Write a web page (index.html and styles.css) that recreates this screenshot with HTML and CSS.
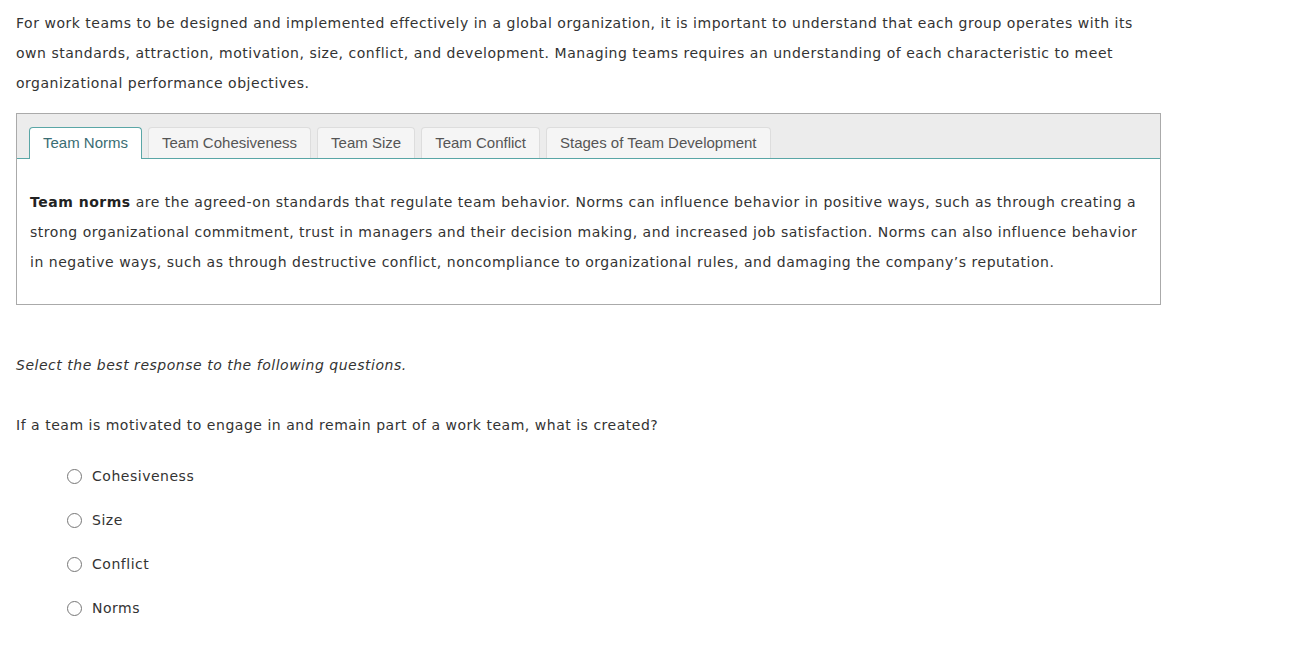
FILE: index.html
```html
<!DOCTYPE html>
<html lang="en">
<head>
  <meta charset="UTF-8">
  <title>Team Characteristics</title>
  <link rel="stylesheet" href="styles.css">
</head>
<body>
  <p class="intro">For work teams to be designed and implemented effectively in a global organization, it is important to understand that each group operates with its own standards, attraction, motivation, size, conflict, and development. Managing teams requires an understanding of each characteristic to meet organizational performance objectives.</p>

  <div class="tabs">
    <div class="tab-bar">
      <div class="tab active">Team Norms</div>
      <div class="tab">Team Cohesiveness</div>
      <div class="tab">Team Size</div>
      <div class="tab">Team Conflict</div>
      <div class="tab">Stages of Team Development</div>
    </div>
    <div class="tab-panel">
      <p><strong>Team norms</strong> are the agreed-on standards that regulate team behavior. Norms can influence behavior in positive ways, such as through creating a strong organizational commitment, trust in managers and their decision making, and increased job satisfaction. Norms can also influence behavior in negative ways, such as through destructive conflict, noncompliance to organizational rules, and damaging the company’s reputation.</p>
    </div>
  </div>

  <p class="instructions">Select the best response to the following questions.</p>

  <p class="question">If a team is motivated to engage in and remain part of a work team, what is created?</p>

  <ul class="options">
    <li><span class="radio"></span>Cohesiveness</li>
    <li><span class="radio"></span>Size</li>
    <li><span class="radio"></span>Conflict</li>
    <li><span class="radio"></span>Norms</li>
  </ul>
</body>
</html>
```

FILE: styles.css
```css
body {
  margin: 0;
  padding: 8px 16px;
  font-family: "DejaVu Sans", Verdana, sans-serif;
  font-size: 14px;
  letter-spacing: 0.52px;
  line-height: 30px;
  color: #333;
  background-color: white;
}
p {
  margin: 0;
}
.intro {
  width: 1140px;
}
.tabs {
  width: 1143px;
  margin-top: 15px;
  border: 1px solid #aaa;
}
.tab-bar {
  display: flex;
  gap: 6px;
  padding: 13px 12px 0;
  background-color: #ececec;
  border-bottom: 1px solid #5aa6a6;
}
.tab {
  font-family: "Liberation Sans", Arial, sans-serif;
  font-size: 15px;
  letter-spacing: 0;
  line-height: 30px;
  padding: 0 13px;
  color: #555;
  background-color: #f5f5f5;
  border: 1px solid #ddd;
  border-bottom: none;
  border-radius: 4px 4px 0 0;
}
.tab.active {
  color: #3a6d73;
  background-color: white;
  border-color: #5aa6a6;
  margin-bottom: -1px;
  padding-bottom: 1px;
}
.tab-panel {
  padding: 28px 14px 27px 13px;
}
.tab-panel strong {
  color: #222;
}
.instructions {
  font-style: italic;
  margin-top: 45px;
}
.question {
  margin-top: 30px;
}
.options {
  list-style: none;
  margin: 14px 0 0;
  padding: 0 0 0 51px;
}
.options li {
  display: flex;
  align-items: center;
  height: 44px;
}
.radio {
  width: 13px;
  height: 13px;
  border: 1px solid #777;
  border-radius: 50%;
  margin-right: 10px;
}
```
